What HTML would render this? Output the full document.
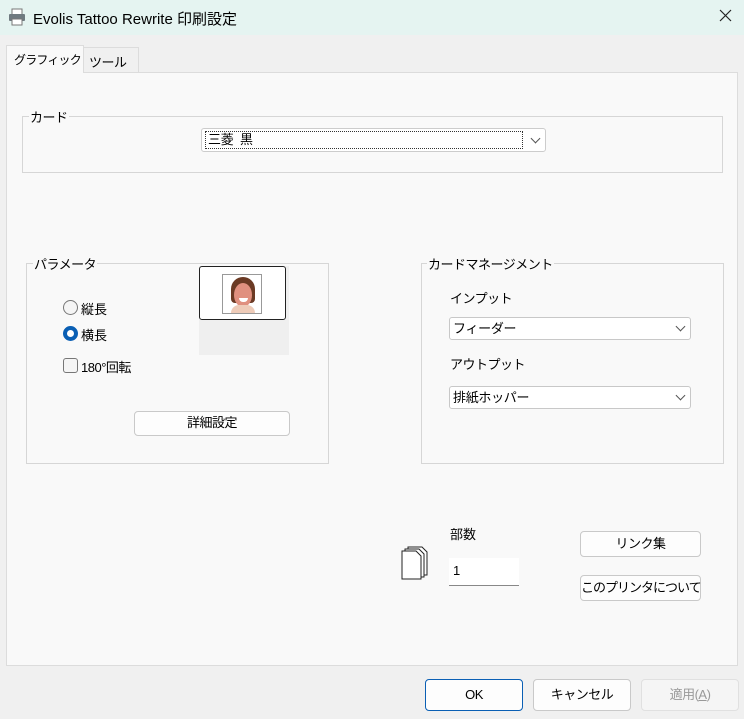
<!DOCTYPE html>
<html><head><meta charset="utf-8"><style>
*{box-sizing:border-box;margin:0;padding:0}
body{width:744px;height:719px;background:#f0f0f0;font-family:"Liberation Sans","Noto Sans CJK JP",sans-serif;font-size:13px;color:#000;position:relative;overflow:hidden}
.a{position:absolute;white-space:nowrap}
.title{left:0;top:0;width:744px;height:35px;background:#e5f4f1}
.grp{border:1px solid #d6d6d6;}
.lbl{background:#f9f9f9;padding:0 1px;font-size:13px;letter-spacing:-0.5px}
.combo{background:#fff;border:1px solid #c8c8c8;border-radius:3px;height:23px;font-size:13px;padding:1px 3px;line-height:19px;letter-spacing:-0.3px}
.btn{background:#fdfdfd;border:1px solid #c9c9c9;border-radius:4px;text-align:center;font-size:13px;line-height:21px;letter-spacing:-0.5px}
.chev{position:absolute;right:6px;width:7px;height:7px;border-right:1px solid #555;border-bottom:1px solid #555;transform:rotate(45deg);top:5px}
</style></head><body>
<div class="a title"></div>
<svg class="a" style="left:8px;top:8px" width="18" height="18" viewBox="0 0 18 18"><rect x="4" y="1" width="10" height="6" fill="#fff" stroke="#777"/><rect x="1" y="6" width="16" height="7" rx="1" fill="#6f7a80"/><rect x="4" y="11" width="10" height="6" fill="#fff" stroke="#777"/></svg>
<div class="a" style="left:33px;top:8px;font-size:15px">Evolis Tattoo Rewrite 印刷設定</div>
<svg class="a" style="left:719px;top:9px" width="13" height="13" viewBox="0 0 13 13"><path d="M1 1L12 12M12 1L1 12" stroke="#222" stroke-width="1.2"/></svg>
<div class="a" style="left:6px;top:72px;width:732px;height:594px;background:#f9f9f9;border:1px solid #dcdcdc"></div>
<div class="a" style="left:83px;top:47px;width:56px;height:25px;background:#f0f0f0;border:1px solid #dcdcdc;border-bottom:none;padding:4px 0 0 5px;font-size:13px;letter-spacing:-0.5px">ツール</div>
<div class="a" style="left:6px;top:45px;width:78px;height:28px;background:#f9f9f9;border:1px solid #dcdcdc;border-bottom:none;padding:5px 0 0 7px;font-size:12px;letter-spacing:-0.8px;overflow:hidden">グラフィック</div>

<div class="a grp" style="left:22px;top:116px;width:701px;height:57px"></div>
<div class="a lbl" style="left:29px;top:107px">カード</div>
<div class="a combo" style="left:201px;top:128px;width:345px;height:24px;border-color:#ccc;padding:2px 3px"><span style="border:1px dotted #333;display:block;width:318px;height:18px;padding-left:2px;line-height:16px">三菱&nbsp;&nbsp;黒</span><div class="chev" style="top:6px"></div></div>

<div class="a grp" style="left:26px;top:263px;width:303px;height:201px"></div>
<div class="a lbl" style="left:33px;top:254px">パラメータ</div>
<div class="a" style="left:63px;top:300px;width:15px;height:15px;border:1px solid #777;border-radius:50%;background:#f5f5f5"></div>
<div class="a" style="left:81px;top:299px">縦長</div>
<div class="a" style="left:63px;top:326px;width:15px;height:15px;border-radius:50%;background:#0a5fb4"></div>
<div class="a" style="left:67px;top:330px;width:7px;height:7px;border-radius:50%;background:#fff"></div>
<div class="a" style="left:81px;top:325px">横長</div>
<div class="a" style="left:63px;top:358px;width:15px;height:15px;border:1px solid #777;border-radius:3px;background:#f5f5f5"></div>
<div class="a" style="left:81px;top:357px;letter-spacing:-0.5px">180°回転</div>
<div class="a" style="left:199px;top:266px;width:90px;height:89px;background:#efefef"></div>
<div class="a" style="left:199px;top:266px;width:87px;height:54px;background:#fff;border:1px solid #222;border-radius:3px"></div>
<div class="a" style="left:222px;top:274px;width:40px;height:40px;border:1px solid #999;background:#fff;overflow:hidden">
<div style="position:absolute;left:8px;top:2px;width:24px;height:26px;border-radius:12px 12px 4px 4px;background:#6b3a24"></div>
<div style="position:absolute;left:11px;top:8px;width:18px;height:24px;border-radius:50%;background:#e0907f"></div>
<div style="position:absolute;left:8px;top:30px;width:24px;height:12px;border-radius:8px 8px 0 0;background:#eecbb8"></div>
<div style="position:absolute;left:16px;top:23px;width:9px;height:4px;border-radius:0 0 6px 6px;background:#fff"></div></div>
<div class="a btn" style="left:134px;top:411px;width:156px;height:25px">詳細設定</div>

<div class="a grp" style="left:421px;top:263px;width:303px;height:201px"></div>
<div class="a lbl" style="left:427px;top:254px">カードマネージメント</div>
<div class="a" style="left:450px;top:288px;letter-spacing:-0.5px">インプット</div>
<div class="a combo" style="left:449px;top:317px;width:242px">フィーダー<div class="chev"></div></div>
<div class="a" style="left:450px;top:354px;letter-spacing:-0.5px">アウトプット</div>
<div class="a combo" style="left:449px;top:386px;width:242px">排紙ホッパー<div class="chev"></div></div>

<div class="a" style="left:450px;top:524px">部数</div>
<svg class="a" style="left:400px;top:546px" width="30" height="34" viewBox="0 0 30 34"><path d="M8 1h14l5 5v23H8z" fill="#fff" stroke="#222"/><path d="M5 3h14l5 5v23H5z" fill="#fff" stroke="#222"/><path d="M2 5h14l5 5v23H2z" fill="#fff" stroke="#222"/></svg>
<div class="a" style="left:449px;top:558px;width:70px;height:28px;background:#fff;border-bottom:1px solid #888;padding:5px 4px;font-size:13px">1</div>
<div class="a btn" style="left:580px;top:531px;width:121px;height:26px;line-height:24px">リンク集</div>
<div class="a btn" style="left:580px;top:575px;width:121px;height:26px;line-height:24px;letter-spacing:-1px">このプリンタについて</div>

<div class="a btn" style="left:425px;top:679px;width:98px;height:32px;line-height:30px;border-color:#0a5fb4">OK</div>
<div class="a btn" style="left:533px;top:679px;width:98px;height:32px;line-height:30px">キャンセル</div>
<div class="a btn" style="left:641px;top:679px;width:98px;height:32px;line-height:30px;background:#f5f5f5;border-color:#e0e0e0;color:#999">適用(<u>A</u>)</div>
</body></html>
